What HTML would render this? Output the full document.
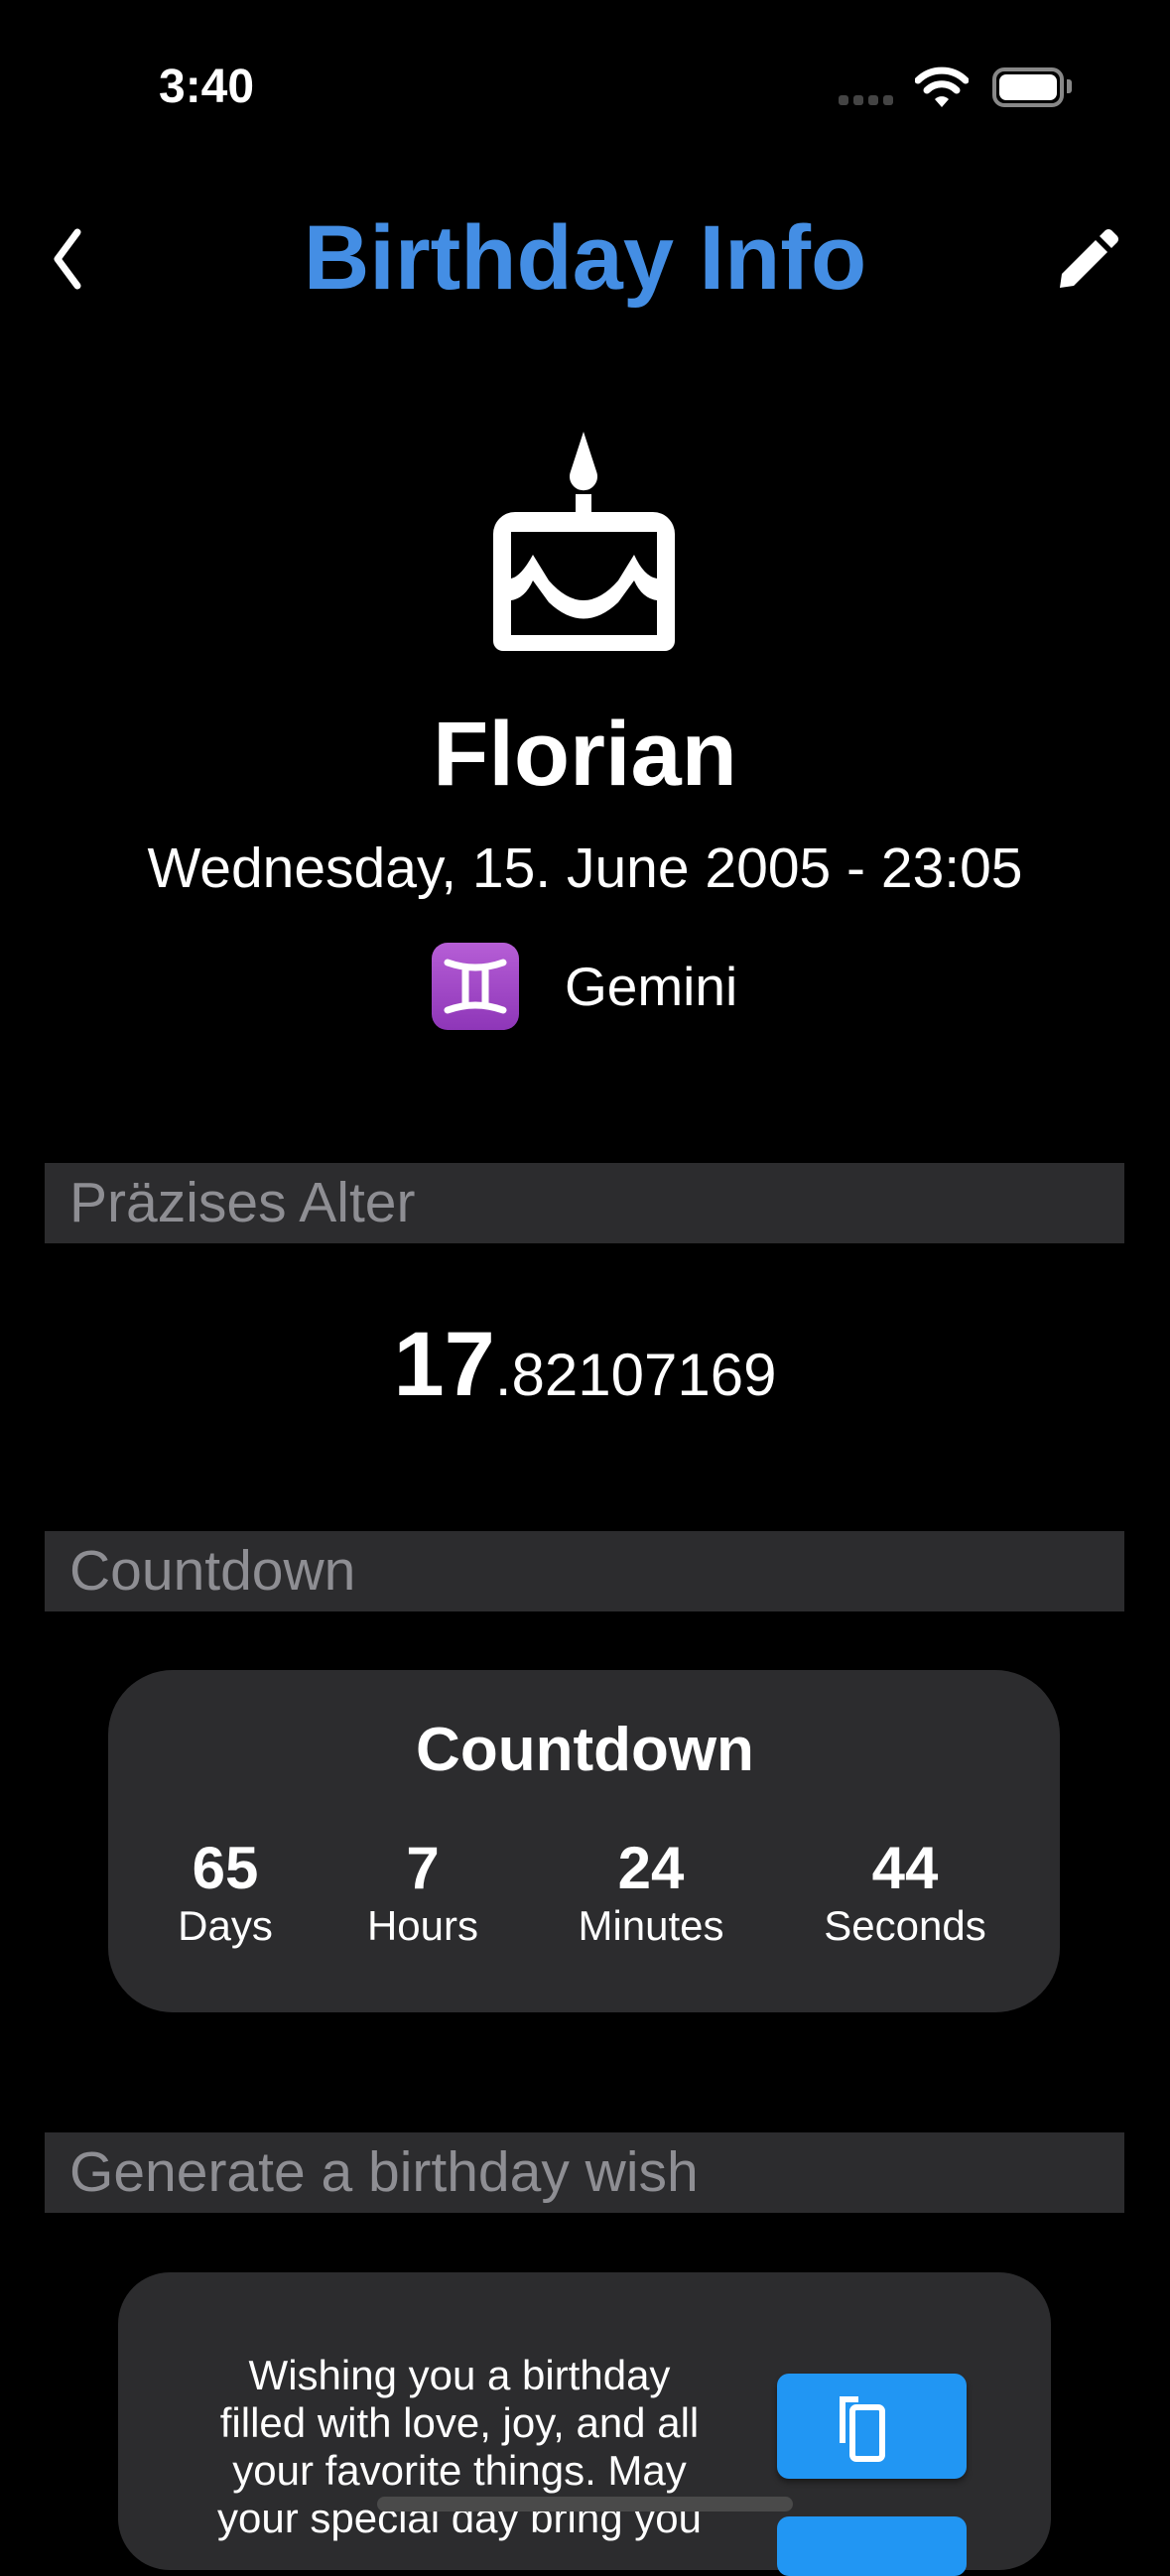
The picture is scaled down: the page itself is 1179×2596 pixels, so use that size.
<!DOCTYPE html>
<html><head><meta charset="utf-8"><style>
*{margin:0;padding:0;box-sizing:border-box}
body{width:1179px;height:2556px;background:#000;color:#fff;font-family:"Liberation Sans","DejaVu Sans",sans-serif;position:relative;overflow:hidden}
.a{position:absolute}
.hdr{position:absolute;left:45px;width:1088px;height:81px;background:#2c2c2e;color:#8e8e93;font-size:57px;line-height:81px;padding-left:25px}
.card{position:absolute;background:#2c2c2e}
.col{position:absolute;top:1850px;width:240px;text-align:center}
.col b{display:block;font-size:60px;line-height:66px}
.col span{display:block;font-size:42px;line-height:50px}
</style></head><body>
<div class="a" style="left:160px;top:60px;font-size:48px;font-weight:bold;line-height:56px">3:40</div>
<div class="a" style="left:845px;top:96px;width:58px;height:10px;">
 <span class="a" style="left:0;width:10px;height:10px;border-radius:3px;background:#444"></span>
 <span class="a" style="left:15px;width:10px;height:10px;border-radius:3px;background:#444"></span>
 <span class="a" style="left:30px;width:10px;height:10px;border-radius:3px;background:#444"></span>
 <span class="a" style="left:45px;width:10px;height:10px;border-radius:3px;background:#444"></span>
</div>
<svg class="a" style="left:922px;top:66px" width="54" height="44" viewBox="0 0 54 44"><path d="M3 15 A34 34 0 0 1 51 15" stroke="#fff" stroke-width="7" fill="none" stroke-linecap="round"/><path d="M12 25 A21 21 0 0 1 42 25" stroke="#fff" stroke-width="7" fill="none" stroke-linecap="round"/><path d="M20 34 L27 42 L34 34 A10 10 0 0 0 20 34Z" fill="#fff"/></svg>
<div class="a" style="left:1000px;top:68px;width:72px;height:40px;border:4px solid #888;border-radius:12px"><div style="margin:3px;height:26px;background:#fff;border-radius:7px"></div></div>
<div class="a" style="left:1075px;top:80px;width:5px;height:14px;background:#888;border-radius:0 3px 3px 0"></div>
<svg class="a" style="left:46px;top:230px" width="40" height="62" viewBox="0 0 40 62"><path d="M32 4 L12 31 L32 58" stroke="#fff" stroke-width="7" fill="none" stroke-linecap="round" stroke-linejoin="round"/></svg>
<div class="a" style="left:0;width:1179px;top:205px;text-align:center;font-size:92px;font-weight:bold;color:#448ee4;line-height:110px">Birthday Info</div>
<svg class="a" style="left:1066px;top:230px" width="62" height="62" viewBox="0 0 62 62"><path d="M2 60 L4 46 L38 12 L50 24 L16 58Z" fill="#fff"/><path d="M42 8 L48 2 Q51 0 54 2 L60 8 Q62 11 60 14 L54 20Z" fill="#fff"/></svg>
<svg class="a" style="left:497px;top:435px" width="183" height="221" viewBox="0 0 183 221"><path d="M91 0 L104 40 A14 14 0 1 1 78 40Z" fill="#fff"/><rect x="83" y="63" width="16" height="20" fill="#fff"/><path d="M22 81 H161 A22 22 0 0 1 183 103 V211 A10 10 0 0 1 173 221 H10 A10 10 0 0 1 0 211 V103 A22 22 0 0 1 22 81Z M18 101 V205 H165 V101Z" fill="#fff" fill-rule="evenodd"/><path d="M18 148 Q28 146 40 124 L56 150 Q91 190 126 150 L142 124 Q152 146 165 148 V170 Q150 168 142 150 L126 172 Q91 205 56 172 L40 150 Q32 168 18 170Z" fill="#fff"/></svg>
<div class="a" style="left:0;width:1179px;top:705px;text-align:center;font-size:92px;font-weight:bold;line-height:110px">Florian</div>
<div class="a" style="left:0;width:1179px;top:843px;text-align:center;font-size:57px;line-height:64px">Wednesday, 15. June 2005 - 23:05</div>
<div class="a" style="left:435px;top:950px;width:88px;height:88px;border-radius:16px;background:linear-gradient(#b65ed6,#8e36b8)">
<svg width="88" height="88" viewBox="0 0 88 88"><path d="M16 20 Q44 30 72 20 M16 68 Q44 58 72 68 M34 26 V62 M54 26 V62" stroke="#fff" stroke-width="7" fill="none" stroke-linecap="round"/></svg></div>
<div class="a" style="left:569px;top:962px;font-size:55px;line-height:64px">Gemini</div>
<div class="hdr" style="top:1172px">Präzises Alter</div>
<div class="a" style="left:0;width:1179px;top:1320px;text-align:center;line-height:110px"><span style="font-size:92px;font-weight:bold">17</span><span style="font-size:60px">.82107169</span></div>
<div class="hdr" style="top:1543px">Countdown</div>
<div class="card" style="left:109px;top:1683px;width:959px;height:345px;border-radius:65px"></div>
<div class="a" style="left:0;width:1179px;top:1729px;text-align:center;font-size:62px;font-weight:bold;line-height:70px">Countdown</div>
<div class="col" style="left:107px"><b>65</b><span>Days</span></div>
<div class="col" style="left:306px"><b>7</b><span>Hours</span></div>
<div class="col" style="left:536px"><b>24</b><span>Minutes</span></div>
<div class="col" style="left:792px"><b>44</b><span>Seconds</span></div>
<div class="hdr" style="top:2149px">Generate a birthday wish</div>
<div class="card" style="left:119px;top:2290px;width:940px;height:300px;border-radius:52px"></div>
<div class="a" style="left:163px;width:600px;top:2370px;text-align:center;font-size:42px;line-height:48px;white-space:nowrap">Wishing you a birthday<br>filled with love, joy, and all<br>your favorite things. May<br>your special day bring you</div>
<div class="a" style="left:783px;top:2392px;width:191px;height:106px;background:#2196f3;border-radius:12px;box-shadow:0 4px 6px rgba(0,0,0,.4)">
<svg class="a" style="left:62px;top:20px" width="66" height="70" viewBox="0 0 66 70"><path d="M4 50 V6 H20" stroke="#fff" stroke-width="6" fill="none"/><rect x="14" y="14" width="30" height="52" rx="4" stroke="#fff" stroke-width="6" fill="none"/></svg></div>
<div class="a" style="left:783px;top:2536px;width:191px;height:60px;background:#2196f3;border-radius:12px"></div>
<div class="a" style="left:380px;top:2516px;width:419px;height:15px;background:#4a4a4a;border-radius:8px"></div>
</body></html>
